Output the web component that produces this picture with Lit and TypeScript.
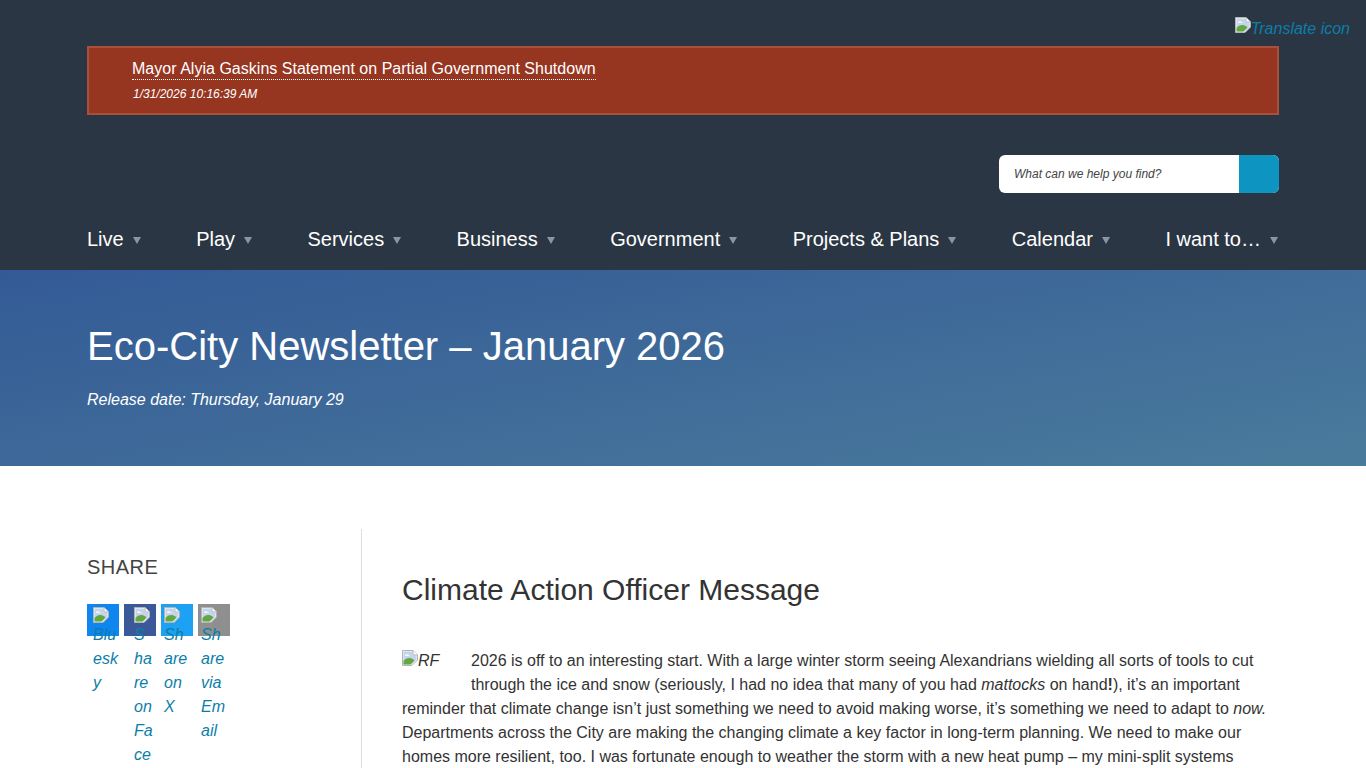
import { LitElement, html, css } from "lit";
import { customElement } from "lit/decorators.js";

const brokenIcon = html`<svg class="broken" viewBox="0 0 16 16" width="16" height="16" aria-hidden="true">
  <path d="M0.5 0.5H11L15.5 5V10L10 15.5H0.5Z" fill="#f4f4f4" stroke="#b4b4b4"/>
  <path d="M1.5 1.5H10.5V5.5H14.5V9.5L9.5 14.5H1.5Z" fill="#c4d4ee"/>
  <path d="M3 5c.8-1 2.4-1 3.2-.2.8.1 1.6.5 1.6 1H3Z" fill="#fff"/>
  <path d="M1.5 14.5V11C3.5 8.4 7 7.4 9.5 8.6 11 9.3 12 9.8 12.5 10.4L8.5 14.5Z" fill="#62a83f"/>
  <path d="M11 0.5V5H15.5" fill="#fff" stroke="#b4b4b4"/>
</svg>`;

const shares = [
  { cls: "bluesky", lines: ["Blu", "esk", "y"] },
  { cls: "facebook", lines: ["S", "ha", "re", "on", "Fa", "ce", "bo", "ok"] },
  { cls: "x", lines: ["Sh", "are", "on", "X"] },
  { cls: "email", lines: ["Sh", "are", "via", "Em", "ail"] },
];

const nav = ["Live", "Play", "Services", "Business", "Government", "Projects & Plans", "Calendar", "I want to…"];

@customElement("app-root")
export class AppRoot extends LitElement {
  static styles = css`
    :host {
      display: block;
      height: 768px;
      overflow: hidden;
      background: #fff;
      font-family: "Liberation Sans", Arial, sans-serif;
      color: #333;
      font-size: 16px;
      line-height: 24px;
    }
    a { color: inherit; text-decoration: none; }
    .top {
      background: #2b3644;
      height: 270px;
      padding: 0 87px;
      box-sizing: border-box;
      display: flex;
      flex-direction: column;
    }
    .translate-row {
      height: 46px;
      flex: none;
      margin-right: -71px;
      display: flex;
      justify-content: flex-end;
      padding-top: 17px;
      box-sizing: border-box;
    }
    .translate {
      color: #0b7ea8;
      font-style: italic;
      display: flex;
      align-items: flex-start;
      height: 16px;
      line-height: 24px;
    }
    .broken { flex: none; display: block; }
    .alert {
      height: 69px;
      flex: none;
      box-sizing: border-box;
      background: #963520;
      border: 2px solid #a9503a;
      padding: 9px 43px;
      color: #fff;
    }
    .alert a {
      display: inline-block;
      line-height: 20px;
      letter-spacing: 0.02px;
      border-bottom: 1px dotted #fff;
    }
    .alert time {
      display: block;
      margin-top: 4px;
      font-size: 12px;
      line-height: 18px;
      font-style: italic;
      padding-left: 1px;
    }
    .search-row {
      display: flex;
      justify-content: flex-end;
      margin-top: 40px;
    }
    .search {
      width: 280px;
      height: 38px;
      display: flex;
      border-radius: 6px;
      overflow: hidden;
      background: #fff;
    }
    .search span {
      flex: 1;
      padding-left: 15px;
      font-size: 12px;
      font-style: italic;
      line-height: 38px;
      color: #444;
    }
    .search b { width: 40px; background: #0d94c0; }
    .nav {
      display: flex;
      justify-content: space-between;
      margin-top: 34px;
      color: #fff;
      font-size: 20px;
      line-height: 24px;
    }
    .nav a { display: flex; align-items: center; }
    .nav i {
      width: 0;
      height: 0;
      margin-left: 9px;
      margin-right: 1px;
      margin-top: 2px;
      border-left: 4px solid transparent;
      border-right: 4px solid transparent;
      border-top: 7px solid #8d959e;
    }
    .hero {
      height: 196px;
      box-sizing: border-box;
      padding: 52px 87px 0;
      background: linear-gradient(170deg, #335a96 0%, #4a7b9c 100%);
      color: #fff;
    }
    .hero h1 {
      margin: 0;
      font-size: 40px;
      line-height: 48px;
      font-weight: 400;
    }
    .hero p {
      margin: 18px 0 0;
      font-style: italic;
      line-height: 24px;
    }
    .layout {
      display: grid;
      grid-template-columns: 275px 1fr;
      padding: 0 87px;
      margin-top: 63px;
    }
    aside {
      border-right: 1px solid #ddd;
      padding-top: 26px;
      height: 300px;
    }
    aside h2 {
      margin: 0;
      font-size: 20px;
      line-height: 24px;
      font-weight: 400;
      letter-spacing: 0.5px;
      color: #444;
    }
    .shares { display: flex; gap: 5px; margin-top: 25px; }
    .share {
      width: 32px;
      height: 32px;
      color: #0b7ea8;
      font-style: italic;
    }
    .share .inner { margin-top: 3px; }
    .share.bluesky { background: #0f85f0; }
    .share.bluesky .inner { padding-left: 6px; }
    .share.facebook { background: #3b5998; }
    .share.facebook .inner { padding-left: 10px; }
    .share.x { background: #1da1f2; }
    .share.x .inner { padding-left: 3px; }
    .share.email { background: #8f8f8f; }
    .share.email .inner { padding-left: 3px; }
    .share .line { display: block; height: 24px; white-space: nowrap; }
    main { padding-left: 40px; }
    main h2 {
      margin: 41px 0 0;
      font-size: 30px;
      line-height: 40px;
      font-weight: 400;
      color: #333;
    }
    .article { margin: 39px 0 0; }
    .photo {
      float: left;
      width: 69px;
      height: 48px;
      display: flex;
      align-items: flex-start;
      font-style: italic;
    }
    .photo .broken { margin-top: 1px; }
  `;

  render() {
    return html`
      <header class="top">
        <div class="translate-row">
          <a class="translate" href="#">${brokenIcon}Translate icon</a>
        </div>
        <div class="alert">
          <a href="#">Mayor Alyia Gaskins Statement on Partial Government Shutdown</a>
          <time>1/31/2026 10:16:39 AM</time>
        </div>
        <div class="search-row">
          <div class="search"><span>What can we help you find?</span><b></b></div>
        </div>
        <nav class="nav">
          ${nav.map((n) => html`<a href="#">${n}<i></i></a>`)}
        </nav>
      </header>
      <section class="hero">
        <h1>Eco-City Newsletter – January 2026</h1>
        <p>Release date: Thursday, January 29</p>
      </section>
      <div class="layout">
        <aside>
          <h2>SHARE</h2>
          <div class="shares">
            ${shares.map(
              (s) => html`<a class="share ${s.cls}" href="#"><div class="inner">${brokenIcon}${s.lines.map(
                (l) => html`<span class="line">${l}</span>`
              )}</div></a>`
            )}
          </div>
        </aside>
        <main>
          <h2>Climate Action Officer Message</h2>
          <p class="article">
            <span class="photo">${brokenIcon}RF</span>2026 is off to an interesting start. With a large winter storm seeing Alexandrians wielding all sorts of tools to cut through the ice and snow (seriously, I had no idea that many of you had <em>mattocks</em> on hand<b>!</b>), it’s an important reminder that climate change isn’t just something we need to avoid making worse, it’s something we need to adapt to <em>now.</em> Departments across the City are making the changing climate a key factor in long-term planning. We need to make our homes more resilient, too. I was fortunate enough to weather the storm with a new heat pump – my mini-split systems
          </p>
        </main>
      </div>
    `;
  }
}
